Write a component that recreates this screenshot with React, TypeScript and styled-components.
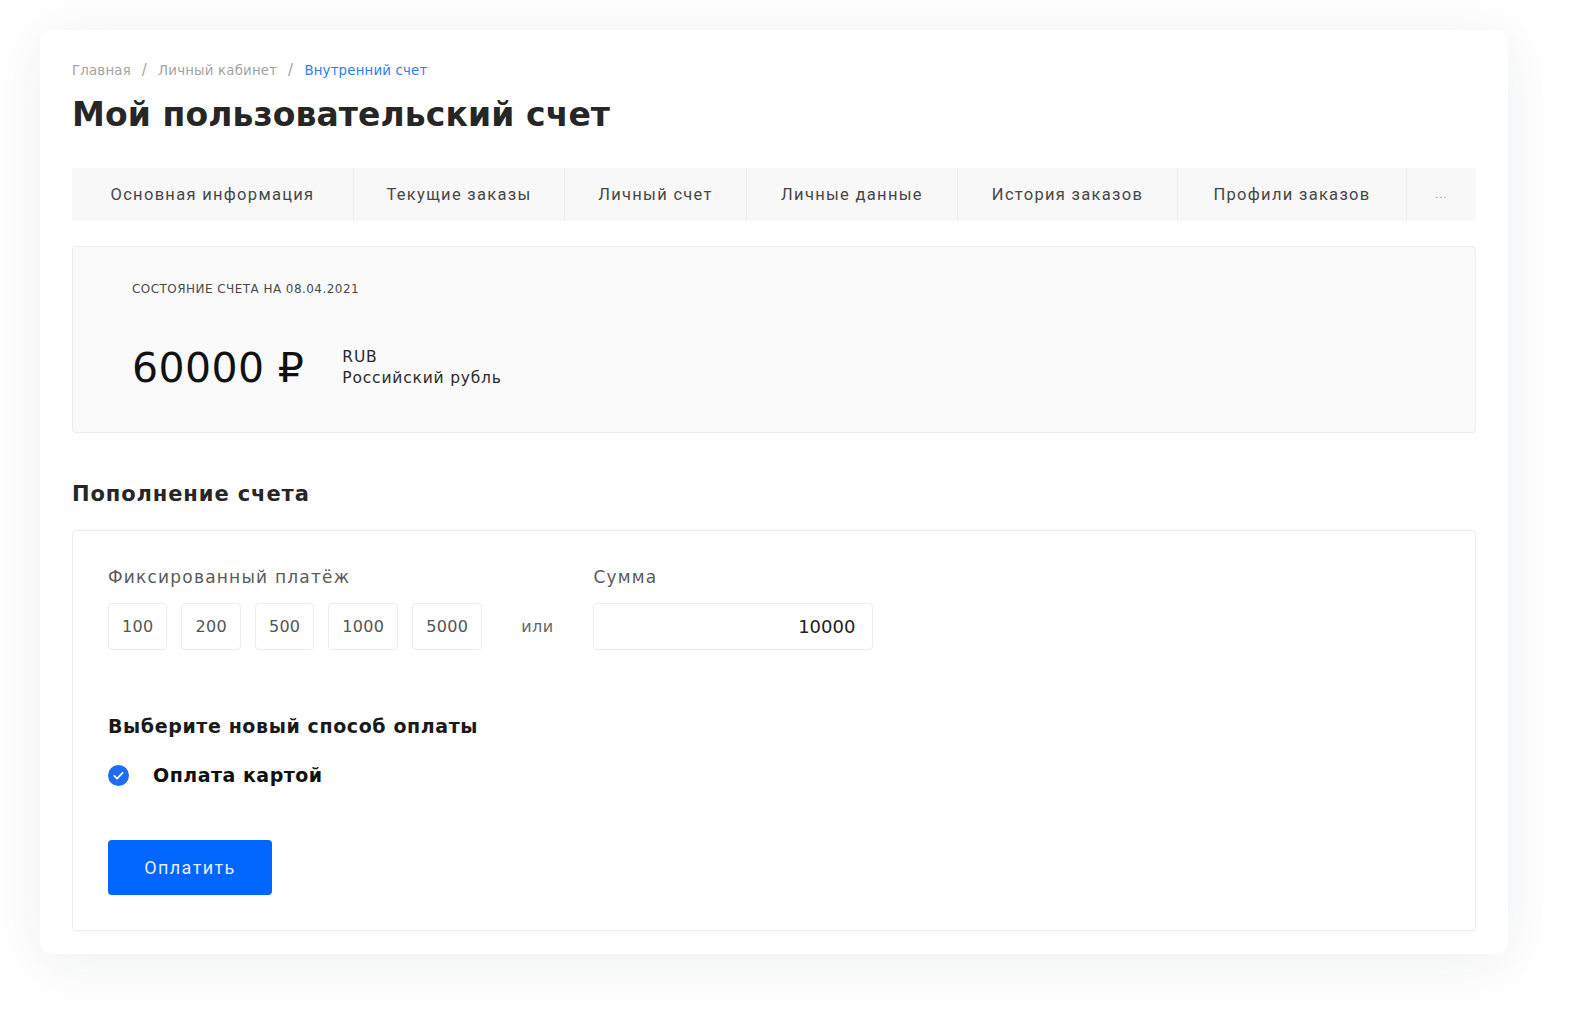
import React, { useState } from "react";
import styled, { createGlobalStyle } from "styled-components";

const GlobalStyle = createGlobalStyle`
  html, body {
    margin: 0;
    padding: 0;
    background: #ffffff;
    overflow: hidden;
  }
  * {
    box-sizing: border-box;
  }
`;

const tabs = [
  { label: "Основная информация", width: 282 },
  { label: "Текущие заказы", width: 211 },
  { label: "Личный счет", width: 182 },
  { label: "Личные данные", width: 211 },
  { label: "История заказов", width: 220 },
  { label: "Профили заказов", width: 229 },
  { label: "...", width: 69 },
];

const fixedSums = [100, 200, 500, 1000, 5000];

const App = () => {
  const [sum, setSum] = useState("10000");

  return (
    <>
      <GlobalStyle />
      <Page>
        <Card>
          <Breadcrumbs>
            <Crumb>Главная</Crumb>
            <Slash>/</Slash>
            <Crumb>Личный кабинет</Crumb>
            <Slash>/</Slash>
            <Crumb $active>Внутренний счет</Crumb>
          </Breadcrumbs>
          <Title>Мой пользовательский счет</Title>

          <Tabs>
            {tabs.map((t) => (
              <Tab key={t.label} $width={t.width} $dots={t.label === "..."}>
                {t.label}
              </Tab>
            ))}
          </Tabs>

          <Balance>
            <BalanceLabel>Состояние счета на 08.04.2021</BalanceLabel>
            <BalanceRow>
              <Amount>60000 ₽</Amount>
              <Currency>
                <span>RUB</span>
                <span>Российский рубль</span>
              </Currency>
            </BalanceRow>
          </Balance>

          <SectionTitle>Пополнение счета</SectionTitle>

          <Form>
            <SumsRow>
              <Field>
                <FieldLabel>Фиксированный платёж</FieldLabel>
                <Chips>
                  {fixedSums.map((s) => (
                    <Chip key={s} onClick={() => setSum(String(s))}>
                      {s}
                    </Chip>
                  ))}
                  <Or>или</Or>
                </Chips>
              </Field>
              <Field>
                <FieldLabel>Сумма</FieldLabel>
                <SumInput value={sum} onChange={(e) => setSum(e.target.value)} />
              </Field>
            </SumsRow>

            <MethodTitle>Выберите новый способ оплаты</MethodTitle>
            <Method>
              <CheckIcon viewBox="0 0 22 22">
                <circle cx="11" cy="11" r="11" fill="#1f6cf5" />
                <path
                  d="M6.6 11.4l2.9 2.8 5.8-6"
                  fill="none"
                  stroke="#ffffff"
                  strokeWidth="1.8"
                  strokeLinecap="round"
                  strokeLinejoin="round"
                />
              </CheckIcon>
              <MethodName>Оплата картой</MethodName>
            </Method>

            <PayButton>Оплатить</PayButton>
          </Form>
        </Card>
      </Page>
    </>
  );
};

const Page = styled.div`
  width: 100%;
  height: 1018px;
  padding: 30px 0 0 40px;
`;

const Card = styled.div`
  width: 1468px;
  background: #ffffff;
  border-radius: 12px;
  padding: 30px 32px 23px;
  box-shadow: 0 8px 56px rgba(30, 40, 70, 0.075);
`;

const Breadcrumbs = styled.div`
  display: flex;
  align-items: center;
  gap: 11px;
  height: 20px;
  font-family: "DejaVu Sans", sans-serif;
  font-size: 13.3px;
  letter-spacing: 0.2px;
`;

const Crumb = styled.span<{ $active?: boolean }>`
  color: ${(p) => (p.$active ? "#2b7ef7" : "#a3a3a3")};
`;

const Slash = styled.span`
  color: #a3a3a3;
  font-size: 15px;
`;

const Title = styled.h1`
  margin: 13px 0 0;
  font-family: "DejaVu Sans", sans-serif;
  font-weight: 700;
  font-size: 33px;
  line-height: 44px;
  letter-spacing: 0.1px;
  color: #262626;
`;

const Tabs = styled.div`
  display: flex;
  margin-top: 31px;
  height: 53px;
  background: #f8f8f9;
`;

const Tab = styled.div<{ $width: number; $dots?: boolean }>`
  width: ${(p) => p.$width}px;
  flex: none;
  display: flex;
  align-items: center;
  justify-content: center;
  font-family: Roboto, "Liberation Sans", sans-serif;
  font-size: ${(p) => (p.$dots ? "11px" : "16.5px")};
  letter-spacing: 1.3px;
  color: ${(p) => (p.$dots ? "#888" : "#474747")};
  border-right: 1px solid #ededed;

  &:last-child {
    border-right: none;
  }
`;

const Balance = styled.div`
  margin-top: 25px;
  height: 187px;
  background: #fafafa;
  border: 1px solid #ececec;
  border-radius: 4px;
  padding: 34px 59px 0;
`;

const BalanceLabel = styled.div`
  font-family: "DejaVu Sans", sans-serif;
  font-size: 12px;
  text-transform: uppercase;
  letter-spacing: 0.45px;
  color: #4a4a4a;
  line-height: 16px;
`;

const BalanceRow = styled.div`
  display: flex;
  align-items: center;
  gap: 38px;
  margin-top: 46px;
`;

const Amount = styled.div`
  font-family: "DejaVu Sans", sans-serif;
  font-size: 41px;
  letter-spacing: 0.4px;
  color: #111111;
  line-height: 50px;
`;

const Currency = styled.div`
  display: flex;
  flex-direction: column;
  margin-top: 0;
  font-family: "DejaVu Sans", sans-serif;
  font-size: 15.5px;
  line-height: 21px;
  letter-spacing: 0.8px;
  color: #2a2a2a;
`;

const SectionTitle = styled.h2`
  margin: 47px 0 0;
  font-family: "DejaVu Sans", sans-serif;
  font-weight: 700;
  font-size: 21px;
  line-height: 28px;
  letter-spacing: 0.9px;
  color: #262626;
`;

const Form = styled.div`
  margin-top: 22px;
  border: 1px solid #ececec;
  border-radius: 4px;
  padding: 34px 35px 35px;
  box-shadow: 0 1px 2px rgba(0, 0, 0, 0.04);
`;

const SumsRow = styled.div`
  display: flex;
  gap: 40px;
`;

const Field = styled.div`
  display: flex;
  flex-direction: column;
  gap: 14px;
`;

const FieldLabel = styled.div`
  font-family: "DejaVu Sans", sans-serif;
  font-size: 17px;
  line-height: 24px;
  letter-spacing: 1.2px;
  color: #5a5a5a;
`;

const Chips = styled.div`
  display: flex;
  align-items: center;
  gap: 14px;
`;

const Chip = styled.button`
  height: 47px;
  padding: 0 13px;
  background: #ffffff;
  border: 1px solid #ececec;
  border-radius: 4px;
  font-family: "DejaVu Sans", sans-serif;
  font-size: 16px;
  letter-spacing: 0.3px;
  color: #555555;
  cursor: pointer;
`;

const Or = styled.span`
  margin-left: 25px;
  font-family: "DejaVu Sans", sans-serif;
  font-size: 16px;
  letter-spacing: 0.4px;
  color: #666666;
`;

const SumInput = styled.input`
  width: 280px;
  height: 47px;
  padding: 0 17px;
  border: 1px solid #ececec;
  border-radius: 4px;
  text-align: right;
  font-family: "DejaVu Sans", sans-serif;
  font-size: 18px;
  color: #222222;
  outline: none;
`;

const MethodTitle = styled.div`
  margin-top: 63px;
  font-family: "DejaVu Sans", sans-serif;
  font-weight: 700;
  font-size: 19px;
  line-height: 26px;
  letter-spacing: 0.6px;
  color: #1a1a1a;
`;

const Method = styled.div`
  display: flex;
  align-items: center;
  gap: 24px;
  margin-top: 25px;
`;

const CheckIcon = styled.svg`
  width: 21px;
  height: 21px;
  flex: none;
`;

const MethodName = styled.div`
  font-family: "DejaVu Sans", sans-serif;
  font-weight: 700;
  font-size: 19px;
  letter-spacing: 0.5px;
  color: #111111;
`;

const PayButton = styled.button`
  display: block;
  margin-top: 54px;
  width: 164px;
  height: 55px;
  border: none;
  border-radius: 4px;
  background: #0066ff;
  font-family: Roboto, "Liberation Sans", sans-serif;
  font-size: 18px;
  letter-spacing: 1.4px;
  color: #e3edff;
  cursor: pointer;
`;

export default App;
